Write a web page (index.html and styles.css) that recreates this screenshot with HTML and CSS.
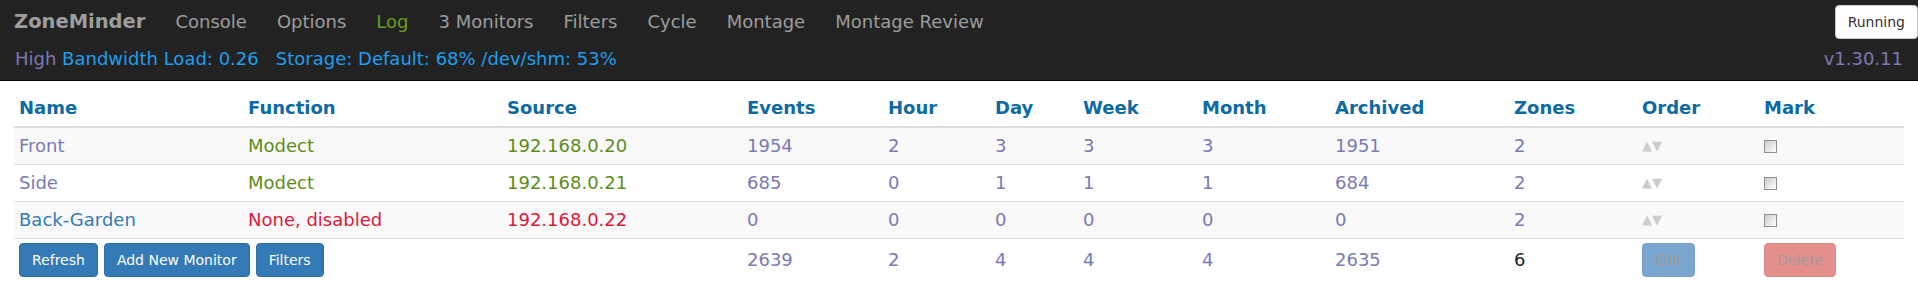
FILE: index.html
```html
<!DOCTYPE html>
<html lang="en">
<head>
    <meta charset="UTF-8">
    <meta name="viewport" content="width=device-width, initial-scale=1.0">
    <title>ZoneMinder - Console</title>
    <link rel="stylesheet" href="styles.css">
</head>
<body>

    <header class="navbar">
        <div class="nav-top">
            <a class="brand" href="#">ZoneMinder</a>
            <ul class="nav-links">
                <li><a href="#">Console</a></li>
                <li><a href="#">Options</a></li>
                <li><a class="log-ok" href="#">Log</a></li>
                <li><a href="#">3 Monitors</a></li>
                <li><a href="#">Filters</a></li>
                <li><a href="#">Cycle</a></li>
                <li><a href="#">Montage</a></li>
                <li><a href="#">Montage Review</a></li>
            </ul>
            <button class="state-btn">Running</button>
        </div>
        <div class="nav-status">
            <div class="load">
                <a class="visited" href="#">High</a> <a class="bandwidth" href="#">Bandwidth</a> Load: 0.26 &nbsp;
                Storage: Default: 68% /dev/shm: 53%
            </div>
            <a class="version visited" href="#">v1.30.11</a>
        </div>
    </header>

    <table class="monitors">
        <colgroup>
            <col style="width: 229px">
            <col style="width: 259px">
            <col style="width: 240px">
            <col style="width: 141px">
            <col style="width: 107px">
            <col style="width: 88px">
            <col style="width: 119px">
            <col style="width: 133px">
            <col style="width: 179px">
            <col style="width: 128px">
            <col style="width: 122px">
            <col style="width: 145px">
        </colgroup>
        <thead>
            <tr>
                <th>Name</th>
                <th>Function</th>
                <th>Source</th>
                <th>Events</th>
                <th>Hour</th>
                <th>Day</th>
                <th>Week</th>
                <th>Month</th>
                <th>Archived</th>
                <th>Zones</th>
                <th>Order</th>
                <th>Mark</th>
            </tr>
        </thead>
        <tbody id="monitorRows">
        </tbody>
        <tfoot>
            <tr>
                <td colspan="3">
                    <div class="actions">
                        <button class="btn">Refresh</button>
                        <button class="btn">Add New Monitor</button>
                        <button class="btn">Filters</button>
                    </div>
                </td>
                <td><a class="visited" href="#">2639</a></td>
                <td><a class="visited" href="#">2</a></td>
                <td><a class="visited" href="#">4</a></td>
                <td><a class="visited" href="#">4</a></td>
                <td><a class="visited" href="#">4</a></td>
                <td><a class="visited" href="#">2635</a></td>
                <td class="zone-total">6</td>
                <td><button class="btn btn-edit" disabled>Edit</button></td>
                <td><button class="btn btn-delete" disabled>Delete</button></td>
            </tr>
        </tfoot>
    </table>

    <script>
        const monitors = [
            { name: "Front", func: "Modect", source: "192.168.0.20", ok: true, visited: true, counts: [1954, 2, 3, 3, 3, 1951], zones: 2 },
            { name: "Side", func: "Modect", source: "192.168.0.21", ok: true, visited: true, counts: [685, 0, 1, 1, 1, 684], zones: 2 },
            { name: "Back-Garden", func: "None, disabled", source: "192.168.0.22", ok: false, visited: false, counts: [0, 0, 0, 0, 0, 0], zones: 2 }
        ];

        const rows = document.getElementById('monitorRows');

        monitors.forEach(m => {
            const tr = document.createElement('tr');
            const state = m.ok ? 'ok' : 'err';

            let html = '<td><a class="' + (m.visited ? 'visited' : 'link') + '" href="#">' + m.name + '</a></td>';
            html += '<td class="' + state + '">' + m.func + '</td>';
            html += '<td class="' + state + '">' + m.source + '</td>';
            m.counts.forEach(c => {
                html += '<td><a class="visited" href="#">' + c + '</a></td>';
            });
            html += '<td><a class="visited" href="#">' + m.zones + '</a></td>';
            html += '<td class="order"><span>&#9650;</span><span>&#9660;</span></td>';
            html += '<td><input type="checkbox" class="mark"></td>';

            tr.innerHTML = html;
            rows.appendChild(tr);
        });
    </script>

</body>
</html>
```

FILE: styles.css
```css
body {
  margin: 0;
  font-family: "DejaVu Sans", Verdana, sans-serif;
  font-size: 18px;
  line-height: 20px;
  color: #333;
  background-color: #fff;
}
a {
  text-decoration: none;
}
.navbar {
  background-color: #222;
  border-bottom: 1px solid #080808;
  height: 80px;
}
.nav-top {
  display: flex;
  align-items: center;
  height: 44px;
}
.brand {
  color: #9d9d9d;
  font-weight: bold;
  font-size: 19.5px;
  padding: 0 15px 0 14px;
}
.nav-links {
  display: flex;
  list-style: none;
  margin: 0;
  padding: 0;
  flex: 1;
}
.nav-links a {
  display: block;
  padding: 0 15px;
  color: #9d9d9d;
}
.nav-links a.log-ok {
  color: #6b9a24;
}
.state-btn {
  font-family: inherit;
  font-size: 14px;
  line-height: 20px;
  padding: 6px 12px;
  margin-right: 0;
  color: #333;
  background-color: #fff;
  border: 1px solid #ccc;
  border-radius: 4px;
}
.nav-status {
  display: flex;
  justify-content: space-between;
  align-items: center;
  padding: 5px 15px 0 15px;
  font-size: 18px;
  color: #1d9ff0;
}
.nav-status .bandwidth {
  color: #1d9ff0;
}
.visited {
  color: #7a7ab4;
}
.link {
  color: #337ab7;
}
.monitors {
  table-layout: fixed;
  border-collapse: collapse;
  border-spacing: 0;
  width: 1890px;
  margin: 9px 14px 0 14px;
}
.monitors th {
  text-align: left;
  color: #0d6aa3;
  font-weight: bold;
  padding: 8px 5px;
  border-bottom: 2px solid #ddd;
}
.monitors td {
  height: 20px;
  padding: 8px 5px;
  border-top: 1px solid #ddd;
  vertical-align: middle;
}
.monitors tbody tr:nth-child(odd) {
  background-color: #f9f9f9;
}
.monitors tbody tr:first-child td {
  border-top: 0;
}
.ok {
  color: #5e8c18;
}
.err {
  color: #e0173c;
}
.monitors td.order {
  font-size: 13px;
  line-height: 20px;
  color: #ccc;
}
.mark {
  appearance: none;
  -webkit-appearance: none;
  display: block;
  width: 13px;
  height: 13px;
  margin: 0;
  border: 1px solid #8f8f8f;
  background: linear-gradient(135deg, #ccc, #fff);
}
.monitors tfoot td {
  padding: 4px 5px 0 5px;
}
.actions {
  display: flex;
  gap: 6px;
}
.btn {
  font-family: inherit;
  font-size: 14px;
  line-height: 20px;
  padding: 6px 12px;
  color: #fff;
  background-color: #337ab7;
  border: 1px solid #2e6da4;
  border-radius: 4px;
  cursor: pointer;
}
.btn-edit {
  background-color: #7ba6cf;
  border-color: #76a0c7;
  color: #9a9a9a;
  cursor: default;
}
.btn-delete {
  background-color: #e58f8c;
  border-color: #e08784;
  color: #a39a9a;
  cursor: default;
}
.zone-total {
  color: #222;
}
```
